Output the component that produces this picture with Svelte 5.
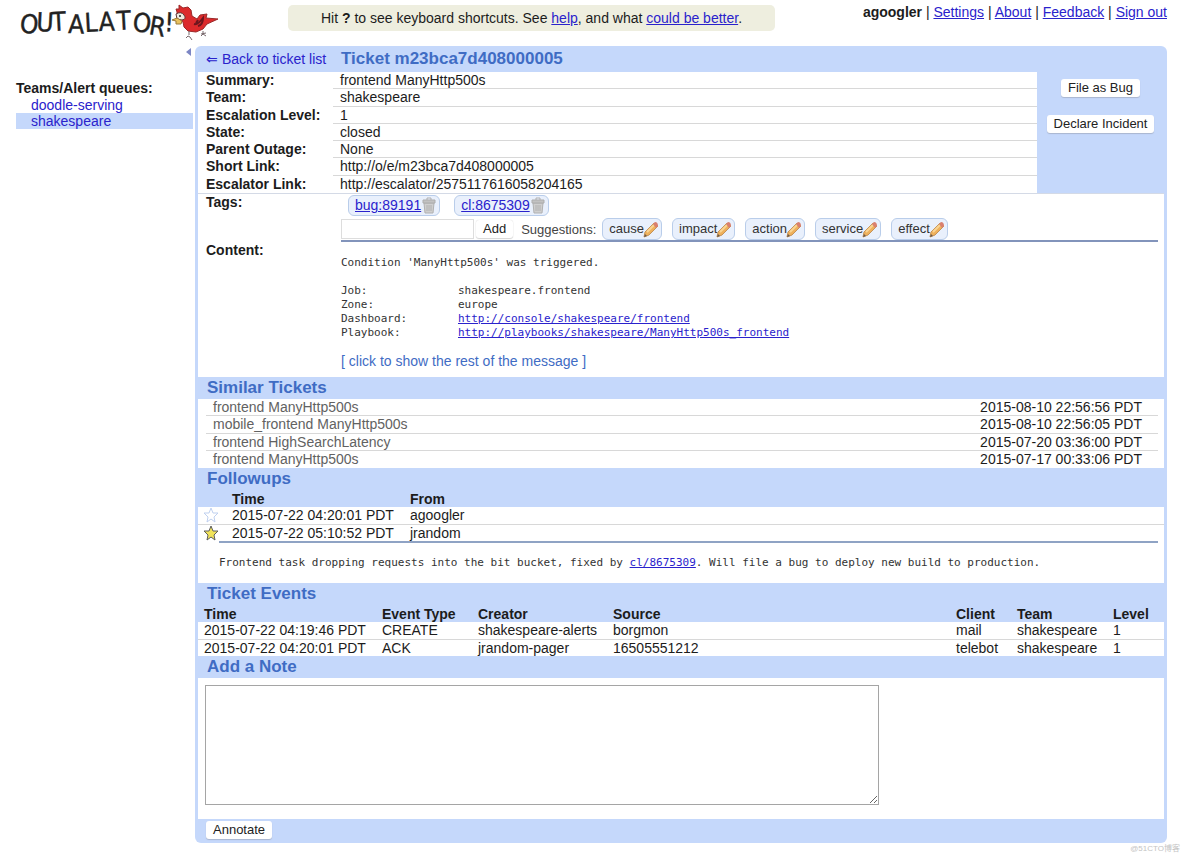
<script>
  const account = ['Settings', 'About', 'Feedback', 'Sign out'];
  const queues = [
    { name: 'doodle-serving', selected: false },
    { name: 'shakespeare', selected: true }
  ];
  const facts = [
    ['Summary:', 'frontend ManyHttp500s'],
    ['Team:', 'shakespeare'],
    ['Escalation Level:', '1'],
    ['State:', 'closed'],
    ['Parent Outage:', 'None'],
    ['Short Link:', 'http://o/e/m23bca7d408000005'],
    ['Escalator Link:', 'http://escalator/2575117616058204165']
  ];
  const tags = ['bug:89191', 'cl:8675309'];
  const suggestions = ['cause', 'impact', 'action', 'service', 'effect'];
  const similar = [
    ['frontend ManyHttp500s', '2015-08-10 22:56:56 PDT'],
    ['mobile_frontend ManyHttp500s', '2015-08-10 22:56:05 PDT'],
    ['frontend HighSearchLatency', '2015-07-20 03:36:00 PDT'],
    ['frontend ManyHttp500s', '2015-07-17 00:33:06 PDT']
  ];
  const eventHeads = ['Time', 'Event Type', 'Creator', 'Source', 'Client', 'Team', 'Level'];
  const events = [
    ['2015-07-22 04:19:46 PDT', 'CREATE', 'shakespeare-alerts', 'borgmon', 'mail', 'shakespeare', '1'],
    ['2015-07-22 04:20:01 PDT', 'ACK', 'jrandom-pager', '16505551212', 'telebot', 'shakespeare', '1']
  ];
  let followups = $state([
    { time: '2015-07-22 04:20:01 PDT', from: 'agoogler', starred: false },
    { time: '2015-07-22 05:10:52 PDT', from: 'jrandom', starred: true }
  ]);
  let newTag = $state('');
  let note = $state('');
</script>

<div class="page">
  <header>
    <svg class="logo" viewBox="0 0 206 46" role="img" aria-label="Outalator">
      <text class="lettering" x="3 20 36 52 69 83 101 116 132 148" y="32 31 31 33 32 31 30 31 34 31" rotate="7 3 -3 2 -3 -2 -3 6 10 3">OUTALATOR!</text>
      <path d="M161 12 160 9 163 9 163 5 167 8 172 7 175 10 176 16 181 19 184 15 191 14 190 18 202 19 191 24 187 29 180 32 172 31 168 27 167 22 161 18Z" fill="#dc2a2c" stroke="#9a2a2a" stroke-width="1" />
      <path d="M160 14Q165 11 168 15T166 20L161 19Z" fill="#efe9e0" stroke="#5d3a3a" stroke-width="1" />
      <circle cx="164" cy="16" r="1" fill="#222" />
      <path d="M161 18 156 20 160 21 160 24 165 24 166 21Z" fill="#e9c25f" stroke="#9a7a3a" stroke-width="1" />
      <path d="M178 24Q182 25 187 18Q187 25 182 26M182 20 180 23" fill="none" stroke="#6d161e" stroke-width="2" />
      <path d="M170 38 172 36 174 37 176 40M185 34 190 33M187 31 187 34 185 36M187 34 190 36M173 31V35" fill="none" stroke="#77686c" stroke-width="1" />
    </svg>
    <p class="hint">Hit <b>?</b> to see keyboard shortcuts. See <a href="#help">help</a>, and what <a href="#better">could be better</a>.</p>
    <nav class="account">
      <b>agoogler</b>{#each account as item}{' '}<span>|</span>{' '}<a href="#account">{item}</a>{/each}
    </nav>
  </header>

  <div class="columns">
    <aside>
      <button class="collapse" aria-label="Collapse sidebar"><svg viewBox="0 0 5 8"><path d="M5 0V8L0 4Z" fill="#7c86c4" /></svg></button>
      <h2>Teams/Alert queues:</h2>
      <ul>
        {#each queues as queue}
          <li class:selected={queue.selected}><a href="#queue">{queue.name}</a></li>
        {/each}
      </ul>
    </aside>

    <main>
      <div class="title">
        <a href="#list">⇐ Back to ticket list</a>
        <h1>Ticket m23bca7d408000005</h1>
      </div>

      <section class="white">
        <div class="top">
          <dl>
            {#each facts as [label, value]}
              <div class="fact"><dt>{label}</dt><dd>{value}</dd></div>
            {/each}
          </dl>
          <div class="actions">
            <button class="push">File as Bug</button>
            <button class="push">Declare Incident</button>
          </div>
        </div>

        <div class="field tags">
          <b>Tags:</b>
          <div class="tag-body">
            <div class="tag-list">
              {#each tags as tag}
                <span class="chip">
                  <a href="#tag">{tag}</a>
                  <button class="bare" aria-label="Remove {tag}">
                    <svg width="16" height="17" viewBox="0 0 16 17">
                      <path d="M3 6H13L12 16H4Z" fill="#cfcfcf" stroke="#b0b0b0" />
                      <path d="M2 3H14V6H2Z" fill="#c2c2c2" stroke="#adadad" />
                      <path d="M6 3V1H10V3M6 8V14M8 8V14M10 8V14" fill="none" stroke="#b0b0b0" />
                    </svg>
                  </button>
                </span>
              {/each}
            </div>
            <form class="adder" onsubmit={(e) => e.preventDefault()}>
              <input aria-label="New tag" bind:value={newTag} />
              <button class="push add">Add</button>
              <span class="caption">Suggestions:</span>
              {#each suggestions as word}
                <button type="button" class="chip word">
                  {word}<svg width="16" height="17" viewBox="0 0 16 17">
                    <path d="M1 16 2 11 11 2 15 5 6 14Z" fill="#eeb15c" stroke="#c4935a" />
                    <path d="M4 11 12 3" stroke="#f9d593" stroke-width="2" />
                    <path d="M10 3 12 1Q15 1 15 5L13 7Z" fill="#d9806f" />
                    <path d="M1 16 2 13 4 15Z" fill="#6b5a49" />
                  </svg>
                </button>
              {/each}
            </form>
          </div>
        </div>

        <div class="field content">
          <b>Content:</b>
          <div class="message">
            <p>Condition 'ManyHttp500s' was triggered.</p>
            <dl class="mono">
              <dt>Job:</dt><dd>shakespeare.frontend</dd>
              <dt>Zone:</dt><dd>europe</dd>
              <dt>Dashboard:</dt><dd><a href="#dashboard">http://console/shakespeare/frontend</a></dd>
              <dt>Playbook:</dt><dd><a href="#playbook">http://playbooks/shakespeare/ManyHttp500s_frontend</a></dd>
            </dl>
            <button class="more">[ click to show the rest of the message ]</button>
          </div>
        </div>
      </section>

      <h2 class="bar">Similar Tickets</h2>
      <section class="white">
        <ul class="similar">
          {#each similar as [name, time]}
            <li><a href="#similar">{name}</a><time>{time}</time></li>
          {/each}
        </ul>
      </section>

      <h2 class="bar">Followups</h2>
      <table class="followups">
        <colgroup><col class="c-star" /><col class="c-when" /><col /></colgroup>
        <thead><tr><td></td><th>Time</th><th>From</th></tr></thead>
        <tbody>
          {#each followups as item}
            <tr>
              <td>
                <button class="bare" aria-label="Star followup" aria-pressed={item.starred} onclick={() => (item.starred = !item.starred)}>
                  <svg class="star" class:on={item.starred} width="16" height="16" viewBox="0 0 16 16"><path d="M8 1 10 6 15 6 11 10 12 15 8 12 4 15 5 10 1 6 6 6Z" /></svg>
                </button>
              </td>
              <td>{item.time}</td>
              <td>{item.from}</td>
            </tr>
          {/each}
        </tbody>
      </table>
      <div class="white reply">
        <p>Frontend task dropping requests into the bit bucket, fixed by <a href="#cl">cl/8675309</a>. Will file a bug to deploy new build to production.</p>
      </div>

      <h2 class="bar">Ticket Events</h2>
      <table class="events">
        <colgroup>
          <col class="e-time" /><col class="e-type" /><col class="e-creator" /><col /><col class="e-client" /><col class="e-team" /><col class="e-level" />
        </colgroup>
        <thead><tr>{#each eventHeads as head}<th>{head}</th>{/each}</tr></thead>
        <tbody>
          {#each events as row}
            <tr>{#each row as cell}<td>{cell}</td>{/each}</tr>
          {/each}
        </tbody>
      </table>

      <h2 class="bar"><label for="note">Add a Note</label></h2>
      <div class="white note"><textarea id="note" bind:value={note}></textarea></div>
      <div class="foot"><button class="push">Annotate</button></div>
    </main>
  </div>
  <footer>@51CTO博客</footer>
</div>

<style>
  :global(body) {
    margin: 0;
    background: #fff;
  }
  .page {
    font: 14px/17px 'Liberation Sans', Arial, sans-serif;
    color: #1c1c1c;
    padding: 0 17px 0 16px;
  }
  h1, h2, p, ul, dl, dd {
    margin: 0;
    padding: 0;
  }
  ul {
    list-style: none;
  }
  a {
    color: #2a22cc;
  }
  button, input, textarea {
    font: 13px/16px 'Liberation Sans', Arial, sans-serif;
    color: #222;
    box-sizing: border-box;
    margin: 0;
  }
  header {
    display: flex;
    align-items: flex-start;
    height: 46px;
  }
  .logo {
    flex: none;
    width: 206px;
    height: 46px;
    margin-right: 66px;
  }
  .lettering {
    font: 26px 'DejaVu Sans Condensed', 'DejaVu Sans', sans-serif;
    fill: #222;
    stroke: #222;
    stroke-width: 0.4;
  }
  .hint {
    flex: 0 1 487px;
    margin-top: 5px;
    padding: 5px 0;
    line-height: 16px;
    text-align: center;
    background: #eeeedf;
    border-radius: 5px;
  }
  .account {
    margin: 4px 0 0 auto;
    white-space: nowrap;
  }
  .columns {
    display: grid;
    grid-template-columns: 177px minmax(0, 1fr);
    column-gap: 2px;
  }
  aside {
    display: flex;
    flex-direction: column;
  }
  .collapse {
    align-self: flex-end;
    display: flex;
    padding: 2px 2px 0 0;
    border: 0;
    background: none;
  }
  .collapse svg {
    width: 5px;
    height: 8px;
  }
  aside h2 {
    margin-top: 24px;
    font-size: 14px;
    line-height: 17px;
  }
  aside li {
    padding-left: 15px;
    line-height: 16px;
  }
  aside li a, .title a {
    text-decoration: none;
  }
  .selected {
    background: #c5d8fb;
  }
  main {
    background: #c5d8fb;
    border-radius: 6px;
    padding: 0 3px;
  }
  .title {
    display: grid;
    grid-template-columns: 135px 1fr;
    align-items: center;
    height: 26px;
    padding-left: 8px;
    white-space: nowrap;
  }
  h1, .bar {
    font-size: 17px;
    line-height: 22px;
    color: #3f6cc4;
  }
  .bar {
    padding-left: 9px;
  }
  .white {
    background: #fff;
  }
  .top {
    display: grid;
    grid-template-columns: minmax(0, 1fr) 127px;
    border-bottom: 1px solid #d4dae6;
  }
  .top dl {
    display: grid;
    grid-template-rows: repeat(7, 1fr);
    min-height: 121px;
    padding-left: 8px;
  }
  .fact {
    display: grid;
    grid-template-columns: 127px 1fr;
  }
  dt {
    font-weight: bold;
  }
  .fact dd {
    padding-left: 7px;
    border-bottom: 1px solid #d8d8d8;
    line-height: 16px;
  }
  .fact:last-child dd {
    border-bottom: 0;
  }
  .actions {
    display: flex;
    flex-direction: column;
    align-items: center;
    gap: 18px;
    padding-top: 7px;
    background: #c5d8fb;
  }
  .push {
    height: 18px;
    padding: 0 7px;
    border: 0;
    border-radius: 3px;
    background: #fff;
    box-shadow: 0 1px 1px #a9b6cf;
  }
  .field {
    display: grid;
    grid-template-columns: 135px minmax(0, 1fr);
    padding: 0 6px 0 8px;
  }
  .tag-body {
    border-bottom: 2px solid #8294bb;
  }
  .tag-list {
    display: flex;
    gap: 14px;
    padding: 1px 7px 2px;
  }
  .chip {
    display: inline-flex;
    align-items: center;
    height: 21px;
    box-sizing: border-box;
    padding: 0 2px 0 6px;
    border: 1px solid #b9cdea;
    border-radius: 6px;
    background: #e9f0fc;
  }
  .chip svg {
    display: block;
    flex: none;
  }
  .bare {
    display: flex;
    padding: 0;
    border: 0;
    background: none;
  }
  .adder {
    display: flex;
    flex-wrap: wrap;
    align-items: center;
  }
  .adder input {
    width: 133px;
    height: 20px;
    border: 1px solid #ddd;
    background: #fff;
  }
  .add {
    margin: 0 8px 0 2px;
    box-shadow: 0 1px 1px #d5d5d5, 0 0 1px #ccc;
  }
  .caption {
    font-size: 13px;
    color: #444;
  }
  .word {
    margin-left: 10px;
    height: 22px;
    padding: 0 2px 0 6px;
    color: #333;
  }
  .word svg {
    margin-left: -1px;
  }
  .caption + .word {
    margin-left: 6px;
  }
  .message {
    padding: 14px 0 7px;
    font: 11px/14px 'DejaVu Sans Mono', monospace;
    color: #333;
  }
  .mono {
    display: grid;
    grid-template-columns: 117px 1fr;
    margin-top: 14px;
  }
  .mono dt {
    font-weight: normal;
  }
  .more {
    margin-top: 13px;
    padding: 0;
    border: 0;
    background: none;
    font-size: 14px;
    line-height: 17px;
    color: #3f6cc4;
  }
  .similar {
    display: grid;
    grid-template-rows: repeat(4, 1fr);
    min-height: 69px;
    padding: 0 6px 0 8px;
  }
  .similar li {
    display: flex;
    justify-content: space-between;
    padding: 0 16px 0 7px;
    line-height: 16px;
    border-bottom: 1px solid #d8d8d8;
  }
  .similar li:last-child {
    line-height: 17px;
    border-bottom: 0;
  }
  .similar a {
    color: #626262;
    text-decoration: none;
  }
  table {
    width: 100%;
    table-layout: fixed;
    border-collapse: collapse;
  }
  th, td {
    padding: 0;
    height: 17px;
    line-height: 16px;
    text-align: left;
    white-space: nowrap;
  }
  tbody tr {
    background: #fff;
  }
  tbody td {
    box-sizing: border-box;
    border-bottom: 1px solid #d8d8d8;
  }
  tbody tr:last-child td {
    border-bottom: 0;
  }
  .c-star {
    width: 34px;
  }
  .c-when {
    width: 178px;
  }
  .followups .bare {
    padding-left: 5px;
  }
  .star {
    display: block;
    fill: #fff;
    stroke: #bfd0ef;
  }
  .star.on {
    fill: #f1e35a;
    stroke: #5e5e5e;
  }
  .reply {
    padding: 0 6px 13px 21px;
  }
  .reply p {
    padding-top: 13px;
    border-top: 2px solid #8fa3c4;
    font: 11px/14px 'DejaVu Sans Mono', monospace;
    color: #333;
  }
  .e-time {
    width: 184px;
  }
  .e-type {
    width: 96px;
  }
  .e-creator {
    width: 135px;
  }
  .e-client {
    width: 61px;
  }
  .e-team {
    width: 96px;
  }
  .e-level {
    width: 51px;
  }
  .events th:first-child, .events td:first-child {
    padding-left: 6px;
  }
  .note {
    padding: 7px 7px 14px;
  }
  textarea {
    display: block;
    width: 674px;
    max-width: 100%;
    height: 120px;
    border: 1px solid #a5a5a5;
    resize: both;
  }
  .foot {
    display: flex;
    height: 24px;
    padding: 2px 8px;
    box-sizing: border-box;
  }
  footer {
    margin-right: -13px;
    text-align: right;
    font: 8px/12px 'Liberation Sans', 'Noto Sans CJK SC', sans-serif;
    color: #c4c4c4;
  }
</style>
